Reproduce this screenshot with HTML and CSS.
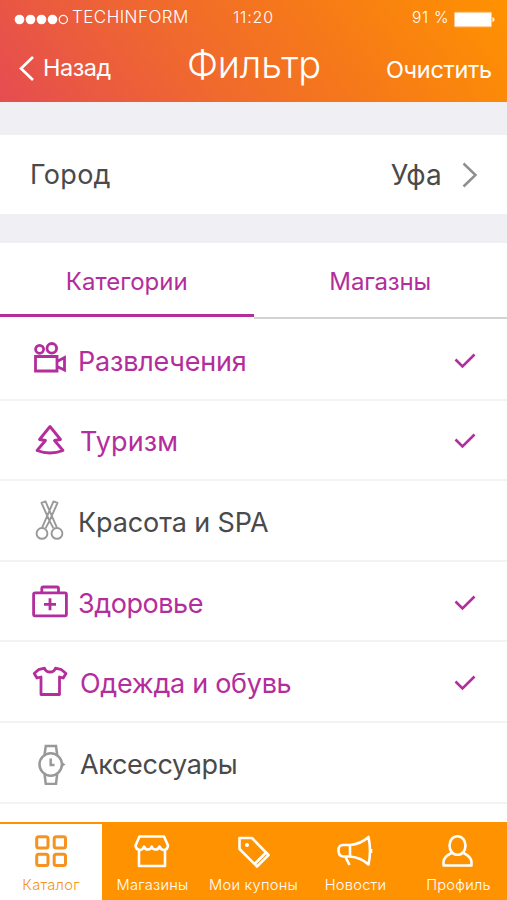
FILE: index.html
```html
<!DOCTYPE html>
<html lang="ru">
<head>
<meta charset="utf-8">
<title>Фильтр</title>
<link rel="stylesheet" href="styles.css">
</head>
<body>
<header class="header">
  <div class="status">
    <svg class="signal" viewBox="14 10 56 18"><g fill="#fff"><circle cx="19.5" cy="19.5" r="4.8"/><circle cx="30.5" cy="19.5" r="4.8"/><circle cx="41.5" cy="19.5" r="4.8"/><circle cx="52.5" cy="19.5" r="4.8"/></g><circle cx="63.3" cy="19.5" r="4.1" fill="none" stroke="#fff" stroke-width="1.2"/></svg>
    <span class="carrier">TECHINFORM</span>
    <span class="time">11:20</span>
    <span class="percent">91 %</span>
    <svg class="battery" viewBox="453 10 42 18"><rect x="454.5" y="12.300" width="37" height="14.500" rx="1" fill="#fff" stroke="#ffc58a" stroke-width="1"/><path d="M492.500 17v5q2-.5 2-2.500t-2-2.500" fill="#fff"/></svg>
  </div>
  <nav class="navbar">
    <a class="back"><svg viewBox="18 52 18 30"><path d="M33 56 21 67.500 33 79" fill="none" stroke="#fff" stroke-width="2.700"/></svg><span>Назад</span></a>
    <h1 class="title">Фильтр</h1>
    <a class="clear">Очистить</a>
  </nav>
</header>
<section class="city">
  <span class="city-label">Город</span>
  <span class="city-value">Уфа</span>
  <svg class="chevron" viewBox="460 160 20 30"><path d="M463.500 163.500 475.500 175 463.500 186.500" fill="none" stroke="#8f8f8f" stroke-width="2.500"/></svg>
</section>
<div class="tabs">
  <a class="tab active"><span class="tab-one">Категории</span></a>
  <a class="tab"><span class="tab-two">Магазны</span></a>
</div>
<main class="list">
  <div class="row on">
    <svg class="icon" viewBox="30 338 40 44"><circle cx="39.600" cy="349.300" r="4"/><circle cx="51.800" cy="348.300" r="4.800"/><path d="M35.500 356.500H57V371H35.500ZM57 361.500 64.500 357.500V370L57 366.500"/></svg>
    <span class="name n1">Развлечения</span>
    <svg class="check" viewBox="453 350 24 20"><path d="m455.500 359.500 7 7L474.500 354.500"/></svg>
  </div>
  <div class="row on">
    <svg class="icon" viewBox="30 419 40 44"><path stroke-linejoin="round" d="M50 427.500 39.500 440.500 45.500 441.500 37 451.500Q50 456.500 63 451.500L54.500 441.500 60.500 440.500Z"/></svg>
    <span class="name n2">Туризм</span>
    <svg class="check" viewBox="453 350 24 20"><path d="m455.500 359.500 7 7L474.500 354.500"/></svg>
  </div>
  <div class="row">
    <svg class="icon thin" viewBox="30 499.600 40 44"><circle cx="42" cy="534" r="5.400"/><circle cx="57" cy="534" r="5.400"/><path stroke-linejoin="round" d="M53.500 529 49.500 521.500 41.500 503.500 45.500 502 57 528.500M45.500 529 49.500 521.500 57.500 503.500 53.500 502 42 528.500"/></svg>
    <span class="name n3">Красота и SPA</span>
  </div>
  <div class="row on">
    <svg class="icon" viewBox="30 580 40 44"><rect x="33.600" y="592.800" width="32.800" height="23" rx="1.500"/><path d="M41.800 592V588.500Q41.800 587 43.300 587H57Q58.500 587 58.500 588.500V592M50 598.300V610.300M44 604.300H56"/></svg>
    <span class="name n4">Здоровье</span>
    <svg class="check" viewBox="453 350 24 20"><path d="m455.500 359.500 7 7L474.500 354.500"/></svg>
  </div>
  <div class="row on">
    <svg class="icon" viewBox="30 661 40 44"><path stroke-linejoin="round" d="M44.500 669.200 38.500 670.700 34.200 674.500 37 679 41 678V695.500H59.500V678L63.200 679 66 674.500 61.500 670.700 55.500 669.200Q54 673 50 673T44.500 669.200Z"/></svg>
    <span class="name n5">Одежда и обувь</span>
    <svg class="check" viewBox="453 350 24 20"><path d="m455.500 359.500 7 7L474.500 354.500"/></svg>
  </div>
  <div class="row">
    <svg class="icon watch" viewBox="30 741 40 44"><circle cx="50.700" cy="764.500" r="11.200"/><path d="M44.500 755 45.800 746H56L57.200 755M44.500 774 45.800 784H56L57.200 774M50.700 758.500V765H54.500"/><path d="m62 762 3.500 2.500L62 767" fill="#999" stroke="none"/></svg>
    <span class="name n6">Аксессуары</span>
  </div>
</main>
<footer class="tabbar">
  <a class="item current"><svg viewBox="30 830 42 40"><g stroke-width="3"><rect x="36.700" y="836.700" width="11.300" height="11.300" rx="2"/><rect x="54.200" y="836.700" width="11.300" height="11.300" rx="2"/><rect x="36.700" y="854.200" width="11.300" height="11.300" rx="2"/><rect x="54.200" y="854.200" width="11.300" height="11.300" rx="2"/></g></svg><span class="t1">Каталог</span></a>
  <a class="item"><svg viewBox="132 830 42 40"><path d="M139 849V866H165V849M139.500 836.500H164L168 845.500Q167.500 850 163.500 850 160.500 849.500 159.500 846.500 158.500 849.500 155.500 849.500T151.700 846.500Q151 849.500 148 849.500T144 846.500Q143 850 139.800 850 136 849.500 135.500 845.500Z"/></svg><span class="t2">Магазины</span></a>
  <a class="item"><svg viewBox="233 830 42 40"><path d="M239.500 838H252L268.500 855 257 866.500 239.500 849ZM266 852.500 254.500 864"/><circle cx="247" cy="845" r="2" fill="currentColor" stroke="none"/></svg><span class="t3">Мои купоны</span></a>
  <a class="item"><svg viewBox="334 830 42 40"><path d="M350 845H343Q338.500 845 338.500 850.500T343 856.500H350ZM350 845Q361 844 368.500 837 371.500 851 368.500 864.500 361 857.500 350 856.500M345.500 857 349.500 865M371 849V853"/></svg><span class="t4">Новости</span></a>
  <a class="item"><svg viewBox="435 830 42 40"><ellipse cx="457.500" cy="845.500" rx="8" ry="9.300"/><path d="M451.500 853Q443.500 857 443.500 862V865.500H471.500V862Q471.500 857 463.500 853"/></svg><span class="t5">Профиль</span></a>
</footer>
</body>
</html>
```
FILE: styles.css
```css
* { box-sizing: border-box; }
body { margin: 0; width: 507px; height: 900px; overflow: hidden; display: flex; flex-direction: column; background: #efeff4; color: #4a4a4a; font-family: Inter, "Noto Sans", sans-serif; font-weight: 400; }
svg { display: block; flex: none; fill: none; }
span, h1, a { white-space: nowrap; }
.header { height: 102px; flex: none; color: #fff; background: linear-gradient(54deg, #e54c51 0%, #f0692e 38%, #f67a18 65%, #ff9200 100%); }
.status { height: 36px; display: flex; align-items: center; padding-left: 14px; font-size: 16px; font-weight: 300; }
.status span { margin-top: -2px; }
.signal { width: 56px; height: 18px; margin-top: 2px; }
.battery { width: 42px; height: 18px; margin: 2px 0 0 4px; }
.carrier { width: 161px; margin-left: 2px; font-size: 17px; letter-spacing: .45px; }
.time { width: 179px; font-size: 16px; letter-spacing: .8px; }
.percent { width: 37px; font-size: 15.500px; letter-spacing: .7px; }
.navbar { height: 66px; display: grid; grid-template-columns: 187px 199px 1fr; align-items: center; }
.back { display: flex; align-items: center; padding-left: 18px; gap: 7px; font-size: 23.500px; font-weight: 400; letter-spacing: -.5px; }
.back svg { width: 18px; height: 30px; margin-top: -3px; }
.back span { margin-top: -3px; }
.title { margin: 0 0 11px; font-size: 38px; font-weight: 300; letter-spacing: -.2px; }
.clear { font-size: 23.500px; font-weight: 400; letter-spacing: -.35px; }
.city { height: 79px; margin: 33px 0 29px; flex: none; background: #fff; display: flex; align-items: center; padding: 0 27px 0 30px; font-size: 27px; font-weight: 400; }
.city-label { letter-spacing: .3px; }
.city-value { margin-left: auto; margin-right: 18px; font-size: 28px; letter-spacing: .2px; }
.chevron { width: 20px; height: 30px; }
.tabs { height: 77px; flex: none; display: flex; background: #fff; }
.tab { flex: 1; height: 76px; padding-top: 3px; display: flex; align-items: center; justify-content: center; border-bottom: 2px solid #d2d2d4; color: #b42d9c; font-size: 24px; font-weight: 400; }
.tab.active { height: 74px; padding-top: 6px; border-bottom: 3px solid #b42d9c; }
.tab-two { letter-spacing: -.15px; }
.list { height: 502px; flex: none; background: #fff; }
.row { height: 80.6px; border-bottom: 2px solid #f3f3f5; padding: 0 30px; display: flex; align-items: center; font-size: 27px; font-weight: 400; }
.icon { width: 40px; height: 44px; margin-top: 1px; stroke: #999; stroke-width: 2; }
.on .icon { stroke: #b42d9c; stroke-width: 2.8; }
.icon.thin { stroke-width: 1.900; }
.icon.watch { stroke-width: 2.500; }
.on { color: #b42d9c; }
.name { margin: 4px 0 0 8px; letter-spacing: -.2px; }
.n2, .n5, .n6 { margin-left: 10px; }
.n2 { letter-spacing: .1px; }
.n3 { letter-spacing: -.1px; }
.n4 { letter-spacing: -.45px; }
.n5 { letter-spacing: -.3px; }
.n6 { letter-spacing: -.35px; }
.check { width: 24px; height: 20px; margin-left: auto; margin-top: 1px; stroke: #b42d9c; stroke-width: 2.600; }
.tabbar { height: 78px; flex: none; display: grid; grid-template-columns: 102px 101px 101px 101px 102px; background: #ff9200; border-top: 2px solid #ff9200; color: #fff; }
.item { display: flex; flex-direction: column; align-items: center; padding-top: 6px; font-size: 14.700px; font-weight: 300; letter-spacing: .25px; }
.item svg { width: 42px; height: 40px; stroke: currentColor; stroke-width: 2.600; stroke-linejoin: round; }
.item span { margin-top: 6px; line-height: 18px; }
.t4, .t5 { padding-left: 2px; }
.t5 { margin-left: 3px; }
.current { background: #fff; color: #f69320; }
```
